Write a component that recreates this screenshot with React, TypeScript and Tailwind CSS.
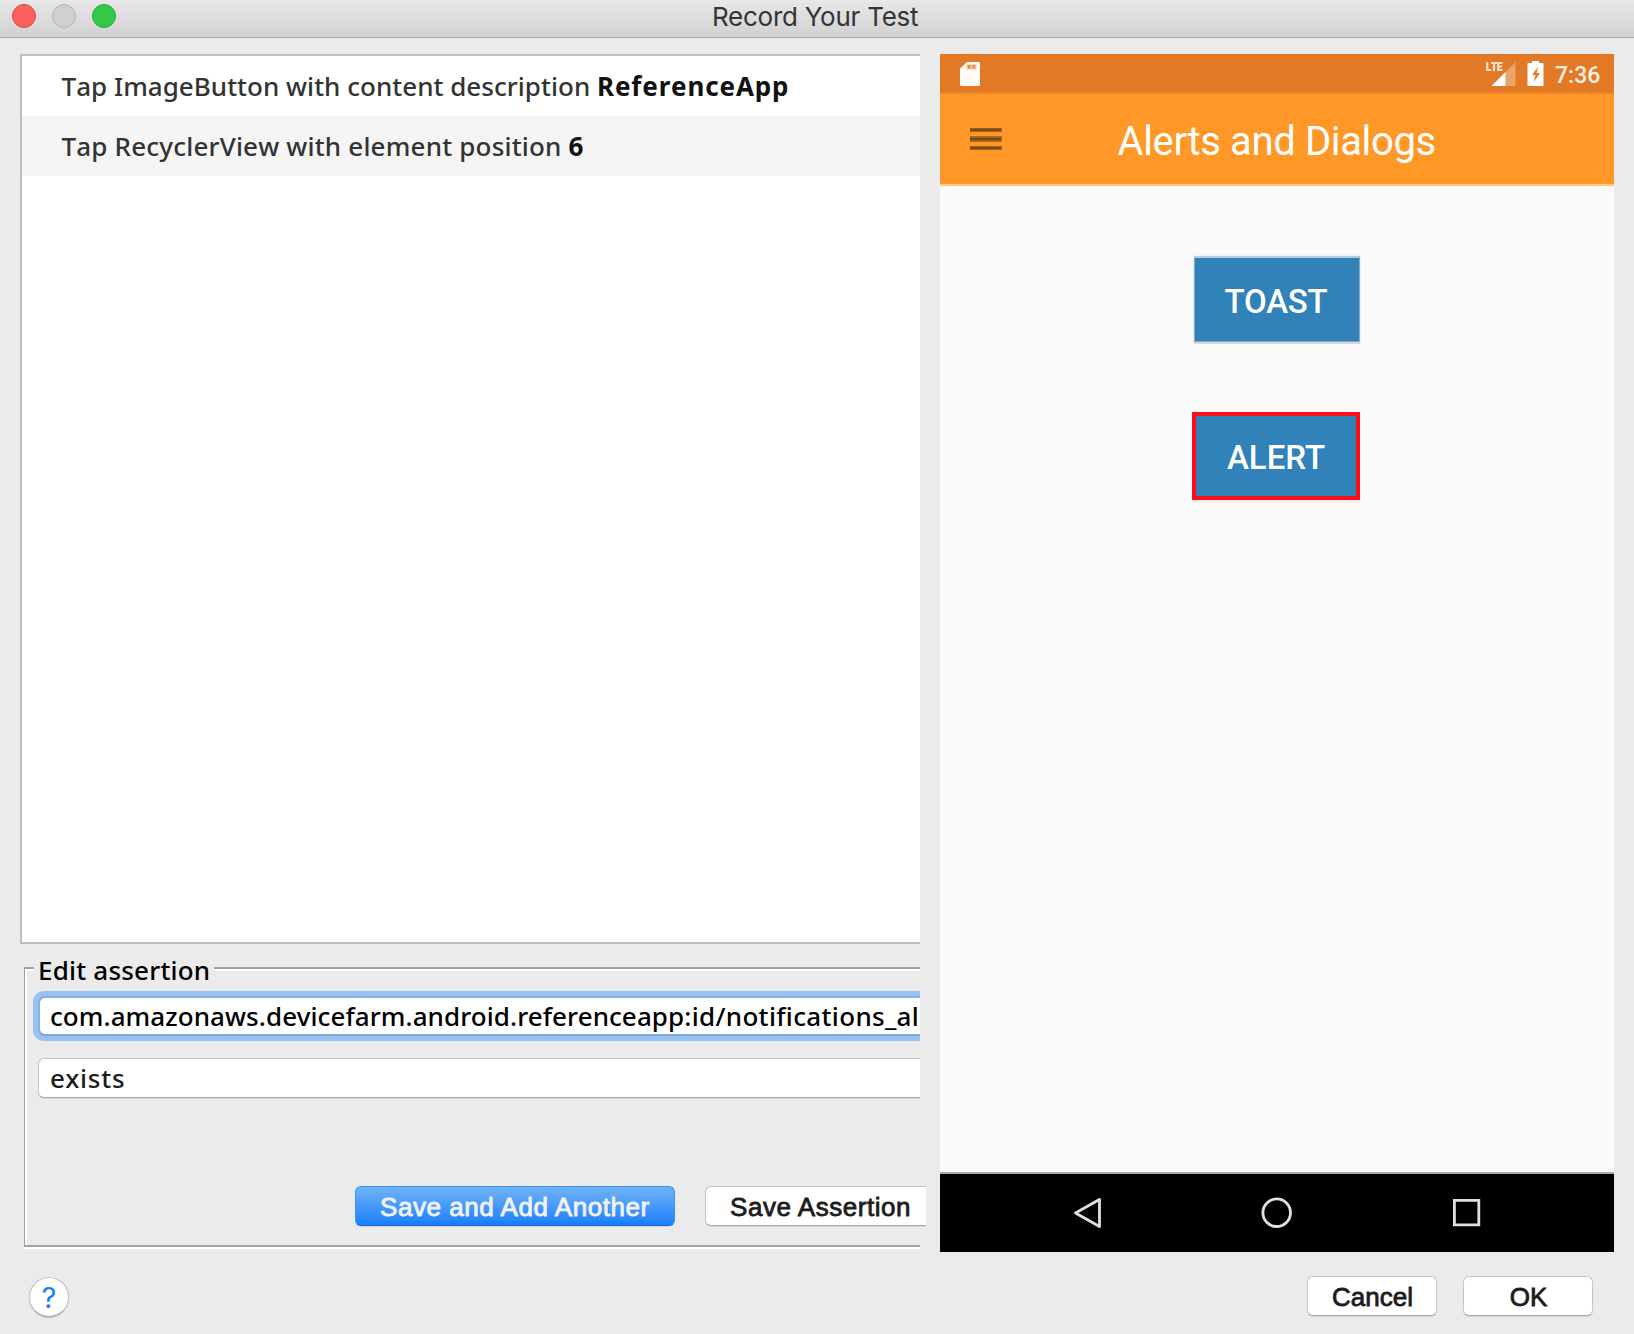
import React from "react";

const LUCIDA = "font-['Noto_Sans','Open_Sans',sans-serif] font-medium text-[26px]";
const HELV = "font-['Liberation_Sans',Arial,sans-serif] text-[26px] leading-[40px] whitespace-nowrap";

function TitleBar() {
  return (
    <div className="relative h-[38px] border-b border-[#adadad] bg-gradient-to-b from-[#e8e8e8] to-[#d1d1d1]">
      <div className="flex gap-4 pl-3 pt-1">
        <span className="size-6 rounded-full border border-[#e2463f] bg-[#fc605c]" />
        <span className="size-6 rounded-full border border-[#b4b4b4] bg-[#d0d0d0]" />
        <span className="size-6 rounded-full border border-[#1fae34] bg-[#34c84a]" />
      </div>
      <div className="absolute left-[712px] top-0 whitespace-nowrap font-['Inter',sans-serif] text-[26px] leading-[33px] tracking-[-0.26px] text-[#343434]">
        Record Your Test
      </div>
    </div>
  );
}

function StepList() {
  return (
    <div className="h-[890px] border-2 border-r-0 border-[#bfbfbf] bg-white text-[#333]">
      <div className={`h-[60px] whitespace-pre pl-[39.5px] leading-[60px] [font-kerning:none] ${LUCIDA}`}>
        <span className="tracking-[0.02px]">Tap ImageButton with content description </span>
        <span className="font-bold tracking-[0.87px] text-[#111]">ReferenceApp</span>
      </div>
      <div className={`h-[60px] whitespace-pre bg-[#f5f5f5] pl-[39.5px] leading-[60px] [font-kerning:none] ${LUCIDA}`}>
        <span className="tracking-[0.19px]">Tap RecyclerView with element position </span>
        <span className="font-bold text-[#111]">6</span>
      </div>
    </div>
  );
}

function AssertionEditor() {
  return (
    <div className="ml-1 mt-2 h-[297px]">
      <div className="flex h-9">
        <div className="mt-[15px] h-[21px] w-[10px] border-l border-t-2 border-[#a1a1a1]">
          <div className="h-full border-l-2 border-t-2 border-white" />
        </div>
        <div className={`w-[180px] whitespace-nowrap pl-1 leading-9 tracking-[0.2px] text-black ${LUCIDA}`}>
          Edit assertion
        </div>
        <div className="mt-[15px] h-1 flex-1 border-b-2 border-t-2 border-b-white border-t-[#a1a1a1]" />
      </div>
      <div className="h-[261px] border-b-2 border-white">
        <div className="h-[259px] border-b-2 border-l border-[#a1a1a1]">
          <div className="h-full border-l-2 border-white pt-[3px]">
            <div className="ml-[6px] h-[50px] overflow-hidden rounded-l-[11px] bg-[#97c1f0] py-[5px] pl-[5px]">
              <div className="h-10 rounded-l-[7px] border-2 border-r-0 border-[#84b1e3] border-b-[#7ba9dc] bg-white">
                <div className={`-my-px whitespace-nowrap pl-[10px] leading-[38px] tracking-[0.17px] text-black ${LUCIDA}`}>
                  <span className="tracking-[0.08px]">com.amazonaws.devicefarm.android.referenceapp</span>
                  <span className="tracking-[0.33px]">:id/notifications_al</span>
                </div>
              </div>
            </div>
            <div className="ml-[11px] mt-[17px] h-10 rounded-l-[6px] border border-r-0 border-[#c4c4c4] border-b-[#a9a9a9] bg-white shadow-[0_1px_0_#d9d9d9]">
              <div className={`pl-[11px] leading-[38px] tracking-[0.75px] text-[#1c1c1c] ${LUCIDA}`}>exists</div>
            </div>
            <div className="mt-[88px] flex gap-[30px] pl-[328px]">
              <button
                className={`h-10 w-[320px] shrink-0 rounded-[6px] border border-[#3b93f8] border-b-[#0f67ee] bg-gradient-to-b from-[#6db3f8] to-[#157efc] pl-[24px] text-left tracking-[0.55px] text-[#f1f1f6] shadow-[0_1px_0_#d2d6de] [-webkit-text-stroke:0.9px_#f1f1f6] ${HELV}`}
              >
                Save and Add Another
              </button>
              <button
                className={`h-10 w-[221px] shrink-0 rounded-l-[6px] border border-r-0 border-[#c4c4c4] border-b-[#a9a9a9] bg-white pl-[24px] text-left tracking-[0.55px] text-[#1c1c1c] shadow-[0_1px_0_#d5d5d5] [-webkit-text-stroke:0.8px_#1c1c1c] ${HELV}`}
              >
                Save Assertion
              </button>
            </div>
          </div>
        </div>
      </div>
    </div>
  );
}

function StatusIcons() {
  return (
    <svg width="60" height="28" viewBox="0 0 60 28" className="mt-[5px]">
      <g fill="none" stroke="#fbdfc8" strokeWidth="2.2">
        <path d="M1.200 3v8h4" />
        <path d="M5 4h6M8 4v8" />
        <path d="M16.500 4h-4.300v7h4.300M12.200 7.500h3.800" />
      </g>
      <path d="M29.500 3v24H5.500z" fill="#eba567" />
      <path d="M19.500 13v14H5.500z" fill="#fff" />
      <path
        d="M46 2h7v2h3.500c.6 0 1 .4 1 1v21c0 .6-.4 1-1 1h-14c-.6 0-1-.4-1-1V5c0-.6.4-1 1-1H46z"
        fill="#fff"
      />
      <path d="M52 8 46 16h3.400l-1.600 7 6.200-9h-3.400z" fill="#e17927" />
    </svg>
  );
}

function Phone() {
  return (
    <div className="flex h-[1198px] w-[674px] shrink-0 flex-col bg-[#fafafa]">
      <div className="flex h-10 shrink-0 border-b-2 border-[#ec8224] bg-[#e17927] pl-5 pr-[13px]">
        <svg width="20" height="24" viewBox="0 0 20 24" className="mt-2">
          <path d="M7 0h11.500c.8 0 1.500.7 1.500 1.500v21c0 .8-.7 1.500-1.500 1.500h-17C.7 24 0 23.300 0 22.500V6.500z" fill="#fffaf5" />
          <path d="M6.500 2.500h10v5h-10z" fill="#f3c39c" />
          <path d="M8 3h2.500v3.500H8zM12.500 3h2.500v3.500h-2.500z" fill="#e68f4a" />
        </svg>
        <div className="flex-1" />
        <StatusIcons />
        <div className="ml-[9px] h-[38px] w-[46px] pt-[5px] font-['Roboto',sans-serif] text-[23px] font-medium leading-[33px] text-[#fdeee0]">
          7:36
        </div>
      </div>
      <div className="flex h-[92px] shrink-0 border-b-2 border-[#ffc680] bg-[#ff9826]">
        <svg width="32" height="22" viewBox="0 0 32 22" className="ml-[30px] mt-[34px]">
          <path d="M0 0h32v4H0zM0 8h32v6H0zM0 18h32v4H0z" fill="#b06a1b" />
          <path d="M0 .5h31v2.700H0zM0 9.800h31v2.400H0zM0 18.800h31v2.400H0z" fill="#7d4a10" />
        </svg>
        <div className="ml-[115.5px] whitespace-nowrap pt-[5px] font-['Roboto',sans-serif] text-[40px] leading-[85px] tracking-[-0.37px] text-white">
          Alerts and Dialogs
        </div>
      </div>
      <div className="flex-1 font-['Roboto',sans-serif] text-[33px] font-medium text-white">
        <button className="ml-[254px] mt-[70px] block h-[86px] w-[166px] border border-t-2 border-[#7dabc9] border-t-[#b4cddd] bg-[#3082b9] pr-[2px] pt-[3px] text-center leading-[81px] tracking-[-0.25px] shadow-[0_2px_1px_rgba(0,0,0,0.12),0_0_2px_rgba(0,0,0,0.08)]">
          TOAST
        </button>
        <button className="ml-[252px] mt-[70px] block h-[88px] w-[168px] border-4 border-[#ff0d1b] bg-[#3082b9] pt-[3px] text-center leading-[77px] shadow-[0_2px_1px_rgba(0,0,0,0.05)]">
          ALERT
        </button>
      </div>
      <div className="h-20 shrink-0 border-t-2 border-[#a9a9a9] bg-black">
        <svg width="674" height="78" viewBox="0 0 674 78" fill="none" stroke="#e0e0e0" strokeWidth="2.800">
          <path d="M159.500 25.500v27l-24-13.500z" strokeLinejoin="round" />
          <circle cx="336.700" cy="38.700" r="13.800" />
          <path d="M514.400 26.400h24.400v24.400h-24.400z" />
        </svg>
      </div>
    </div>
  );
}

function Footer() {
  const base =
    "h-10 w-[130px] rounded-[6px] border border-[#c4c4c4] border-b-[#a9a9a9] bg-white pl-px text-center text-[#1c1c1c] shadow-[0_1px_0_#d5d5d5] [-webkit-text-stroke:0.8px_#1c1c1c]";
  return (
    <div className="flex pl-[29px] pr-[41px] pt-6">
      <button className="mt-px size-10 rounded-full border border-[#c4c4c4] border-b-[#a9a9a9] bg-white pt-px text-center font-['Inter',sans-serif] text-[29px] leading-[36px] text-[#157efb] shadow-[0_1px_1px_#c4c4c4]">
        ?
      </button>
      <div className="flex-1" />
      <button className={`${base} ${HELV}`}>Cancel</button>
      <button className={`ml-[26px] ${base} ${HELV}`}>OK</button>
    </div>
  );
}

export default function App() {
  return (
    <div className="h-[1334px] w-[1634px] overflow-hidden bg-[#ebebeb]">
      <TitleBar />
      <div className="flex gap-5 px-5 pt-4">
        <div className="w-[900px] shrink-0">
          <StepList />
          <AssertionEditor />
        </div>
        <Phone />
      </div>
      <Footer />
    </div>
  );
}
